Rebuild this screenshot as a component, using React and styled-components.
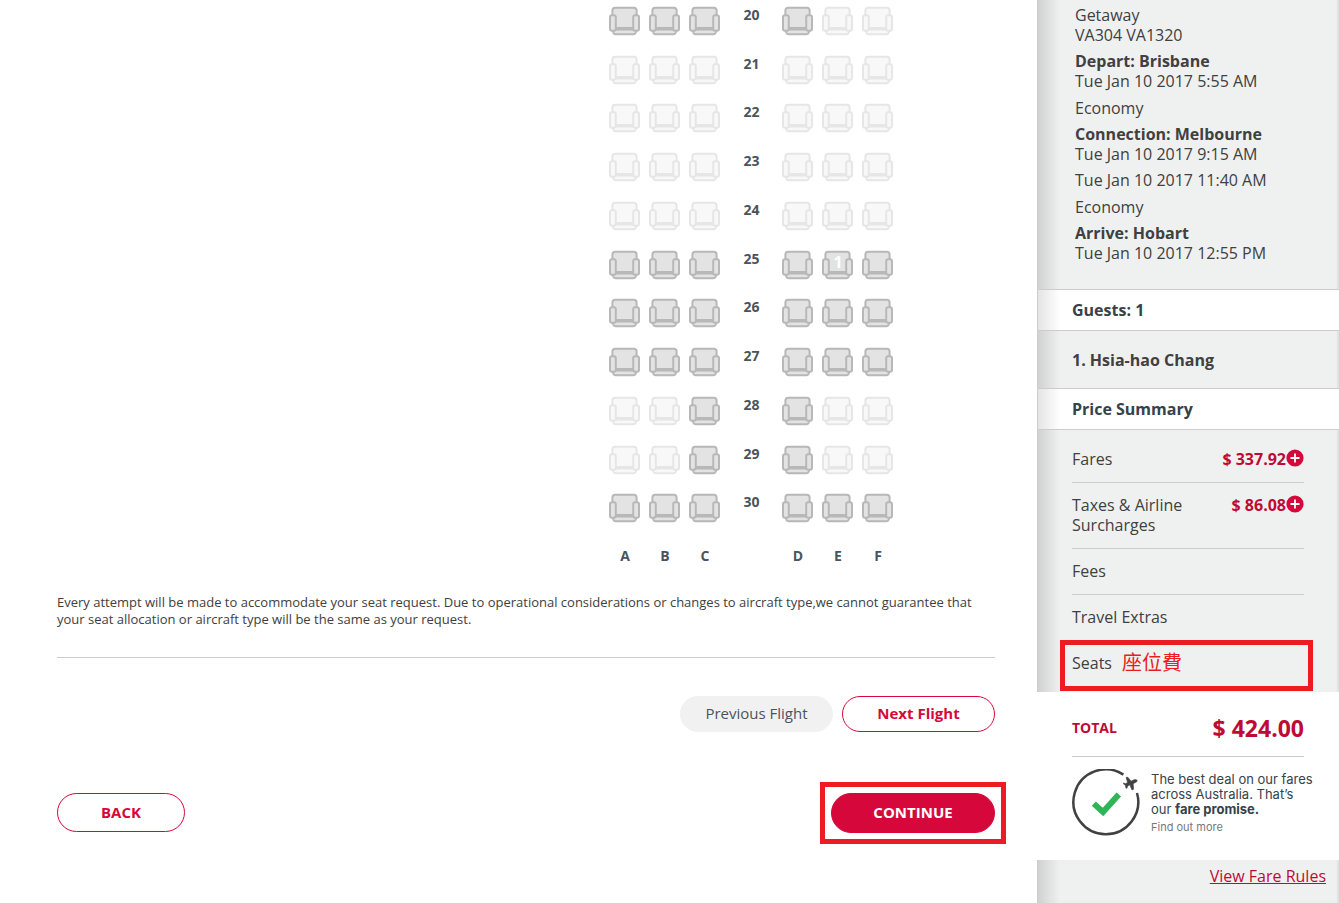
import React from "react";
import styled, { createGlobalStyle } from "styled-components";

// o = open seat, x = blocked seat
const rows = [
  { number: 20, seats: "ooooxx" },
  { number: 21, seats: "xxxxxx" },
  { number: 22, seats: "xxxxxx" },
  { number: 23, seats: "xxxxxx" },
  { number: 24, seats: "xxxxxx" },
  { number: 25, seats: "oooooo", guest: { index: 4, label: "1" } },
  { number: 26, seats: "oooooo" },
  { number: 27, seats: "oooooo" },
  { number: 28, seats: "xxooxx" },
  { number: 29, seats: "xxooxx" },
  { number: 30, seats: "oooooo" },
];

const letters = ["A", "B", "C", "D", "E", "F"];

const charges = [
  { name: "Fares", amount: "$ 337.92" },
  { name: "Taxes & Airline Surcharges", amount: "$ 86.08" },
  { name: "Fees" },
  { name: "Travel Extras" },
];

const SeatIcon = ({ open }) => {
  const stroke = open ? "#b8b8b8" : "#e6e6e6";
  const fill = open ? "#e3e3e3" : "#f8f8f8";
  return (
    <svg width="32" height="30" viewBox="0 0 32 30" aria-hidden="true">
      <g fill={fill} stroke={stroke} strokeWidth="2" strokeLinejoin="round">
        <path d="M3.4 23.5 L4.4 26.8 Q5 28.2 6.6 28.2 H24.4 Q26 28.2 26.6 26.8 L27.8 23.5 Z" />
        <path d="M3.4 9 V4.6 Q3.4 1.8 6.2 1.8 H24.8 Q27.6 1.8 27.6 4.6 V22 H3.4 Z" />
        <rect x="1" y="9.3" width="5.8" height="15.4" rx="2" />
        <rect x="24.2" y="9.3" width="5.8" height="15.4" rx="2" />
      </g>
    </svg>
  );
};

const PlusIcon = () => (
  <svg width="18" height="18" viewBox="0 0 18 18" aria-hidden="true">
    <circle cx="9" cy="9" r="8.6" fill="#d6083b" />
    <path d="M9 4.5 V13.5 M4.5 9 H13.5" stroke="#fff" strokeWidth="1.8" />
  </svg>
);

const PromiseIcon = () => (
  <PromiseSvg width="68" height="68" viewBox="0 0 68 68" aria-hidden="true">
    <path
      d="M51.4 5.6 A32.4 32.4 0 1 0 65 24"
      fill="none"
      stroke="#414042"
      strokeWidth="2.5"
    />
    <path
      d="M21.8 34.6 L31 43 L46.8 25.4"
      fill="none"
      stroke="#2fb457"
      strokeWidth="6"
    />
    <path
      d="M64.5 10 Q63 8.8 61 10.2 L58.6 12 L54.6 8.8 L53 9.4 L55.6 14 L53.6 15.6 L52 15.2 L51.4 16 L54 17.2 L55.2 20 L56.2 19.4 V17.6 L58.2 15.8 L61.4 20.4 L62.8 19.4 L61.2 14 L63.8 11.8 Q64.9 10.8 64.5 10 Z"
      fill="#414042"
      stroke="#414042"
      strokeWidth="0.6"
      transform="rotate(12 58 14)"
    />
  </PromiseSvg>
);

const SeatRow = ({ row }) => {
  const seat = (index) => {
    const open = row.seats[index] === "o";
    const guest = row.guest && row.guest.index === index;
    return (
      <Seat
        key={index}
        type="button"
        disabled={!open}
        aria-label={`Seat ${row.number}${letters[index]}`}
      >
        <SeatIcon open={open} />
        {guest && <GuestNumber>{row.guest.label}</GuestNumber>}
      </Seat>
    );
  };

  return (
    <MapRow>
      {[0, 1, 2].map(seat)}
      <RowNumber>{row.number}</RowNumber>
      {[3, 4, 5].map(seat)}
    </MapRow>
  );
};

const App = () => {
  return (
    <Page>
      <GlobalStyle />
      <Main>
        <SeatMap>
          {rows.map((row) => (
            <SeatRow row={row} key={row.number} />
          ))}
        </SeatMap>
        <LetterRow>
          {letters.slice(0, 3).map((letter) => (
            <span key={letter}>{letter}</span>
          ))}
          <span />
          {letters.slice(3).map((letter) => (
            <span key={letter}>{letter}</span>
          ))}
        </LetterRow>
        <Notice>
          Every attempt will be made to accommodate your seat request. Due to
          operational considerations or changes to aircraft type,we cannot
          guarantee that your seat allocation or aircraft type will be the same
          as your request.
        </Notice>
        <FlightButtons>
          <PillButton type="button" $muted>
            Previous Flight
          </PillButton>
          <PillButton type="button">Next Flight</PillButton>
        </FlightButtons>
        <PageButtons>
          <BackButton type="button">BACK</BackButton>
          <Highlight>
            <ContinueButton type="button">CONTINUE</ContinueButton>
          </Highlight>
        </PageButtons>
      </Main>

      <Sidebar>
        <Itinerary>
          <p>
            Getaway
            <br />
            VA304 VA1320
          </p>
          <p>
            <strong>Depart: Brisbane</strong>
            <br />
            Tue Jan 10 2017 5:55 AM
          </p>
          <p>Economy</p>
          <p>
            <strong>Connection: Melbourne</strong>
            <br />
            Tue Jan 10 2017 9:15 AM
          </p>
          <p>Tue Jan 10 2017 11:40 AM</p>
          <p>Economy</p>
          <p>
            <strong>Arrive: Hobart</strong>
            <br />
            Tue Jan 10 2017 12:55 PM
          </p>
        </Itinerary>
        <BarTitle>Guests: 1</BarTitle>
        <GuestName>1. Hsia-hao Chang</GuestName>
        <BarTitle>Price Summary</BarTitle>
        <Charges>
          {charges.map((charge) => (
            <Charge key={charge.name}>
              <ChargeName>{charge.name}</ChargeName>
              {charge.amount && (
                <Amount>
                  {charge.amount}
                  <ExpandButton
                    type="button"
                    aria-label={`Show ${charge.name}`}
                  >
                    <PlusIcon />
                  </ExpandButton>
                </Amount>
              )}
            </Charge>
          ))}
          <SeatsCharge>
            Seats <SeatsNote lang="zh-Hant">座位費</SeatsNote>
          </SeatsCharge>
        </Charges>
        <TotalPanel>
          <Total>
            <TotalLabel>TOTAL</TotalLabel>
            <TotalAmount>$ 424.00</TotalAmount>
          </Total>
          <Promise>
            <PromiseIcon />
            <PromiseText>
              The best deal on our fares
              <br />
              across Australia. That’s
              <br />
              our <strong>fare promise.</strong>
              <PromiseMore href="#promise">Find out more</PromiseMore>
            </PromiseText>
          </Promise>
        </TotalPanel>
        <FareRules href="#rules">View Fare Rules</FareRules>
      </Sidebar>
    </Page>
  );
};

const GlobalStyle = createGlobalStyle`
  * {
    box-sizing: border-box;
  }
  body {
    margin: 0;
    background: #fff;
    color: #404040;
    font-family: "Open Sans", "Noto Sans CJK TC", sans-serif;
    font-size: 16px;
    line-height: 20px;
  }
  p {
    margin: 0;
  }
  button {
    font-family: inherit;
    cursor: pointer;
  }
`;

const Page = styled.div`
  display: flex;
  min-height: 100vh;
`;

const Main = styled.main`
  flex: 1;
  min-width: 0;
  padding: 0 42px 0 57px;
`;

const SeatMap = styled.div`
  display: grid;
  grid-auto-rows: 1fr;
  justify-content: end;
  min-height: 536px;
  padding-right: 97px;
`;

const MapRow = styled.div`
  display: grid;
  grid-template-columns: repeat(3, 40px) 53px repeat(3, 40px);
  justify-items: center;
  align-items: start;
  padding-top: 6px;
`;

const Seat = styled.button`
  position: relative;
  display: flex;
  padding: 0;
  border: 0;
  background: none;
`;

const GuestNumber = styled.span`
  position: absolute;
  inset: 0;
  color: #fff;
  font-size: 16px;
  font-weight: 700;
  line-height: 24px;
  text-align: center;
`;

const RowNumber = styled.span`
  color: #4a545e;
  font-size: 14px;
  font-weight: 700;
  line-height: 18px;
`;

const LetterRow = styled(MapRow)`
  justify-content: end;
  padding: 10px 97px 0 0;
  color: #4a545e;
  font-size: 14px;
  font-weight: 700;
`;

const Notice = styled.p`
  padding: 28px 0 29px;
  border-bottom: 1px solid #ccc;
  font-size: 13px;
  line-height: 17px;
`;

const FlightButtons = styled.div`
  display: flex;
  justify-content: flex-end;
  gap: 9px;
  margin-top: 38px;
`;

const PillButton = styled.button`
  width: 153px;
  height: 36px;
  padding: 0 0 2px;
  border: 1px solid ${(props) => (props.$muted ? "#f1f1f1" : "#d6083b")};
  border-radius: 18px;
  background: ${(props) => (props.$muted ? "#f1f1f1" : "#fff")};
  color: ${(props) => (props.$muted ? "#4a545e" : "#d6083b")};
  font-size: 15px;
  font-weight: ${(props) => (props.$muted ? 400 : 700)};
`;

const PageButtons = styled.div`
  display: flex;
  justify-content: space-between;
  align-items: flex-start;
  margin-top: 61px;
`;

const BackButton = styled(PillButton)`
  width: 128px;
  height: 39px;
  border-radius: 20px;
`;

const ContinueButton = styled(PillButton)`
  display: block;
  width: 164px;
  height: 40px;
  border-radius: 20px;
  background: #d6083b;
  color: #fff;
`;

const Highlight = styled.div`
  outline: 5px solid #ed1c24;
  outline-offset: 6px;
`;

const Sidebar = styled.aside`
  display: flex;
  flex-direction: column;
  width: 302px;
  flex-shrink: 0;
  border-left: 1px solid #ccc;
  background: linear-gradient(
      to right,
      rgba(0, 0, 0, 0.13),
      rgba(0, 0, 0, 0) 22px
    )
    #eff1f1;
  box-shadow: inset -2px 0 1px rgba(0, 0, 0, 0.06);
`;

const Itinerary = styled.div`
  display: flex;
  flex-direction: column;
  justify-content: space-between;
  min-height: 289px;
  padding: 5px 20px 26px 37px;
`;

const BarTitle = styled.h2`
  margin: 0;
  padding: 10px 34px;
  border: 1px solid #ccc;
  border-width: 1px 0;
  background: linear-gradient(to right, #e4e4e4, #fff 22px);
  color: #36424a;
  font-size: 16px;
  font-weight: 700;
  line-height: 20px;
`;

const GuestName = styled.p`
  padding: 19px 34px 18px;
  font-weight: 700;
`;

const Charges = styled.ul`
  margin: 0;
  padding: 7px 35px 6px 34px;
  list-style: none;
`;

const Charge = styled.li`
  display: flex;
  justify-content: space-between;
  align-items: flex-start;
  padding: 12px 0 13px;
  border-bottom: 1px solid #ccc;
`;

const ChargeName = styled.span`
  max-width: 130px;
`;

const Amount = styled.span`
  display: flex;
  color: #bf0a35;
  font-weight: 700;
`;

const ExpandButton = styled.button`
  display: flex;
  align-items: center;
  height: 18px;
  padding: 0;
  border: 0;
  background: none;
`;

const SeatsCharge = styled.li`
  display: flex;
  gap: 10px;
  margin: 4px -4px 0 -7px;
  padding: 8px 7px 13px;
  outline: 5px solid #ed1c24;
`;

const SeatsNote = styled.span`
  color: #ed1c24;
  font-size: 20px;
`;

const TotalPanel = styled.div`
  margin-left: -1px;
  padding: 21px 35px 23px;
  background: #fff;
`;

const Total = styled.div`
  display: flex;
  justify-content: space-between;
  align-items: center;
  padding-bottom: 13px;
  border-bottom: 1px solid #ccc;
  color: #bf0a35;
  font-weight: 700;
  line-height: 30px;
`;

const TotalLabel = styled.span`
  font-size: 14px;
`;

const TotalAmount = styled.span`
  font-size: 23px;
`;

const Promise = styled.div`
  display: flex;
  gap: 11px;
  padding-top: 12px;
`;

const PromiseSvg = styled.svg`
  flex-shrink: 0;
`;

const PromiseText = styled.div`
  padding-top: 3px;
  color: #36424a;
  font-family: Inter, sans-serif;
  font-size: 13px;
  line-height: 15px;
  white-space: nowrap;
`;

const PromiseMore = styled.a`
  display: block;
  margin-top: 3px;
  color: #77787b;
  font-size: 11px;
  text-decoration: none;
`;

const FareRules = styled.a`
  align-self: flex-end;
  padding: 6px 13px 17px 0;
  color: #bf0a35;
`;

export default App;
